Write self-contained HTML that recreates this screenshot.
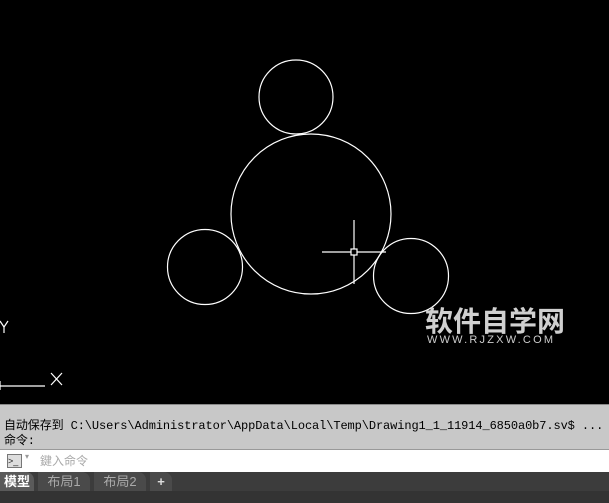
<!DOCTYPE html>
<html><head><meta charset="utf-8"><style>
body{margin:0;width:609px;height:503px;background:#000;position:relative;overflow:hidden;font-family:"Liberation Sans","Noto Sans CJK SC",sans-serif}
.cmd{position:absolute;left:0;top:404px;width:609px;height:45px;background:#c8c8c8;border-top:1px solid #888;box-sizing:border-box}
.cmd div{position:absolute;left:4px;font-size:12px;color:#000;font-family:"Liberation Mono","Noto Sans CJK SC",monospace;white-space:nowrap;letter-spacing:-0.1px}
.inp{position:absolute;left:0;top:449px;width:609px;height:23px;background:#fff;border-top:1px solid #999;box-sizing:border-box}
.tabs{position:absolute;left:0;top:472px;width:609px;height:31px;background:#333}
.tabrow{position:absolute;left:0;top:0;width:609px;height:19px;background:#3c3c3c}
.tab{position:absolute;top:0;height:19px;font-size:13px;line-height:19px;color:#aaa;background:#4a4a4a;border-radius:0 8px 0 0;text-align:center}
</style></head><body>
<svg width="609" height="404" style="position:absolute;left:0;top:0">
<g fill="none" stroke="#fff" stroke-width="1.2">
<circle cx="311" cy="214" r="80"/>
<circle cx="296" cy="97" r="37"/>
<circle cx="205" cy="267" r="37.5"/>
<circle cx="411" cy="276" r="37.5"/>
<line x1="322" y1="252" x2="386" y2="252"/>
<line x1="354" y1="220" x2="354" y2="284"/>
<rect x="351" y="249" width="6" height="6" fill="#000"/>
<line x1="0" y1="386" x2="45" y2="386"/>
<line x1="0" y1="381" x2="0" y2="390"/>
<line x1="51" y1="373" x2="62" y2="385"/>
<line x1="62" y1="373" x2="51" y2="385"/>
<line x1="0" y1="321" x2="4" y2="327"/>
<line x1="8" y1="321" x2="4" y2="327"/>
<line x1="4" y1="327" x2="4" y2="333"/>
</g>
<text x="425" y="331" fill="#d0d0d0" font-size="28" font-weight="bold" font-family="Noto Sans CJK SC,sans-serif">软件自学网</text>
<text x="427" y="343" fill="#ccc" font-size="11" font-family="Liberation Sans,sans-serif" letter-spacing="2.2">WWW.RJZXW.COM</text>
</svg>
<div class="cmd"><div style="top:11px">自动保存到 C:\Users\Administrator\AppData\Local\Temp\Drawing1_1_11914_6850a0b7.sv$ ...</div><div style="top:26px">命令:</div></div>
<div class="inp">
<div style="position:absolute;left:7px;top:4px;width:13px;height:12px;border:1px solid #777;background:#ddd;font-size:9px;line-height:12px;color:#222">&gt;_</div>
<div style="position:absolute;left:25px;top:2px;font-size:8px;color:#999">▾</div>
<div style="position:absolute;left:40px;top:2px;font-size:12px;color:#aaa">鍵入命令</div>
</div>
<div class="tabs"><div class="tabrow"></div>
<div class="tab" style="left:0;width:34px;background:#5a5a5a;color:#fff;font-weight:bold">模型</div>
<div class="tab" style="left:38px;width:52px">布局1</div>
<div class="tab" style="left:94px;width:52px">布局2</div>
<div class="tab" style="left:150px;width:22px;color:#ddd;font-weight:bold">+</div>
</div>
</body></html>
